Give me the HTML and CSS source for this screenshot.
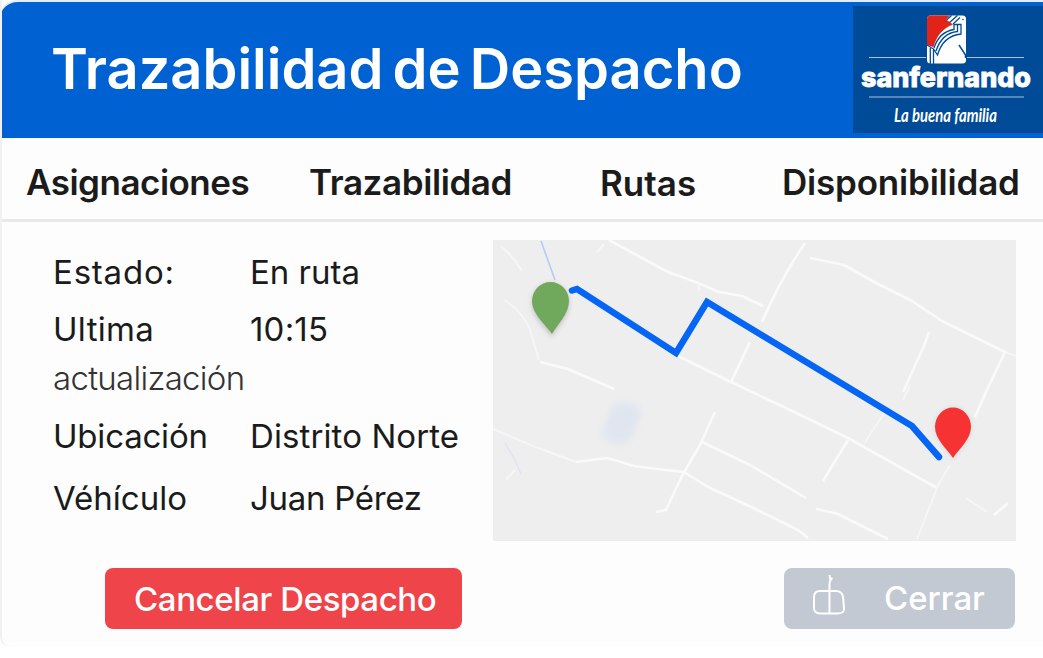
FILE: index.html
```
<!DOCTYPE html>
<html lang="es">
<head>
<meta charset="utf-8">
<title>Trazabilidad de Despacho</title>
<link rel="stylesheet" href="styles.css">
</head>
<body>
<main class="card">
  <header class="header">
    <h1 class="title">Trazabilidad de Despacho</h1>
    <svg class="logo" viewBox="0 0 190 127" width="190" height="127">
      <rect width="190" height="127" fill="#004b98"/>
      <path d="M16 51.500H73M114 51.500H171M16 91H171" stroke="#a9c2dc" stroke-width="1.200"/>
      <rect x="74" y="9.500" width="39" height="48" rx="3.500" fill="#fff"/>
      <path d="M77.500 9.500H97L93 13.500L100 18.500Q85 24 80.500 41L74 39V13Q74 9.500 77.500 9.500Z" fill="#e2231a"/>
      <path d="M96.500 16.500L104.500 9.500M93.500 14L98.500 9.500M100 18L107 11.500" stroke="#004b98" stroke-width="1.200" fill="none"/>
      <path d="M81 42Q86 26 101 23.500V18.500H108V28Q90 30 84.500 49L80.500 43M83 45Q89 27 104.500 25.500V19" stroke="#004b98" stroke-width="1.300" fill="none"/>
      <path d="M74 39L80.500 43V58M77.300 42V58" stroke="#004b98" stroke-width="1.300" fill="none"/>
      <path d="M106 39L112.500 49V52" stroke="#004b98" stroke-width="1.500" fill="none"/>
      <circle cx="110" cy="13.500" r=".8" fill="#004b98"/>
      <text class="logo-name" x="8" y="81" textLength="170" lengthAdjust="spacingAndGlyphs">sanfernando</text>
      <text class="logo-tag" x="41" y="116" textLength="103" lengthAdjust="spacingAndGlyphs">La buena familia</text>
    </svg>
  </header>
  <nav class="nav">
    <a class="tab tab-assign">Asignaciones</a>
    <a class="tab tab-trace">Trazabilidad</a>
    <a class="tab tab-routes">Rutas</a>
    <a class="tab tab-avail">Disponibilidad</a>
  </nav>
  <section class="content">
    <div class="details">
      <span class="first estado">Estado:</span><span class="first">En ruta</span>
      <span class="ultima">Ultima</span><span class="hora">10:15</span>
      <span class="light">actualización</span><span></span>
      <span class="ubic">Ubicación</span><span class="norte">Distrito Norte</span>
      <span>Véhículo</span><span class="juan">Juan Pérez</span>
    </div>
    <svg class="map" viewBox="493 240 523 301" width="523" height="301">
      <defs>
        <filter id="soft" x="-30%" y="-30%" width="160%" height="160%"><feGaussianBlur stdDeviation="2.500"/></filter>
        <filter id="lake" x="-50%" y="-50%" width="200%" height="200%"><feGaussianBlur stdDeviation="3.500"/></filter>
      </defs>
      <rect x="493" y="240" width="523" height="301" fill="#eee"/>
      <path d="M615 402L636 404L642 413L632 438L619 446L602 438L604 424Z" fill="#e0e6f0" filter="url(#lake)"/>
      <g fill="none" stroke="#fafafa" stroke-width="2.600" stroke-linejoin="round">
        <path d="M609 240L640 257L668 272L698 283L719 292L742 296L763 306"/>
        <path d="M805 243Q780 280 762 322M810 258L844 265L876 283L912 301L942 321L1005 352L986 392L975 417"/>
        <path d="M929 332L924 346L903 392"/>
        <path d="M676 355L731 382L790 410L848 438L937 488"/>
        <path d="M750 342L731 382M848 440L823 481"/>
        <path d="M715 412L700 445L682 476L666 510L656 512"/>
        <path d="M702 442L750 465L806 498M816 509L838 514L888 539M684 472L708 487L745 504L798 530L808 538"/>
        <path d="M576 462L607 458L634 466L665 470L684 472"/>
        <path d="M540 362L568 369L614 389"/>
        <path d="M1008 503L994 515"/>
      </g>
      <g fill="none" stroke="#f6f6f6" stroke-width="2">
        <path d="M501 246Q514 257 522 271M505 300Q525 315 530 330L539 360M597 252L604 244M699 282V291M493 429L533 446L576 462M910 385L903 400M885 412L865 442M937 488L917 539M937 487L950 465M966 498L987 512M1005 352L1016 356M506 480L515 470"/>
      </g>
      <path d="M541 241L555 280" stroke="#b4cbf3" stroke-width="1.600"/>
      <path d="M505 443L514 458L521 474" fill="none" stroke="#dfe4f0" stroke-width="1.500"/>
      <path d="M572 290.500L577 289L676 353L707 302L912 426L939 457" fill="none" stroke="#0565f4" stroke-width="6.500" stroke-linecap="round" stroke-linejoin="miter"/>
      <path d="M552 337C546 328 532 318 532 303A18.500 19.500 0 0 1 569 303C569 318 557 327 552 337Z" fill="#a3929f" opacity=".5" filter="url(#soft)"/>
      <path d="M552 334C546 325 532 314 532 301A18.500 19 0 0 1 569 301C569 314 557 325 552 334Z" fill="#70a95b"/>
      <path d="M953 459C947 450 935 440 935 427A18 19 0 0 1 971 427C971 440 959 450 953 459Z" fill="#a9c4c8" opacity=".5" filter="url(#soft)"/>
      <path d="M953 458C947 449 935 439 935 427A18 19.500 0 0 1 971 427C971 439 959 449 953 458Z" fill="#f73232"/>
    </svg>
  </section>
  <footer class="actions">
    <button class="btn cancel">Cancelar Despacho</button>
    <button class="btn close">
      <svg class="close-icon" viewBox="0 0 34 40" width="34" height="40" fill="none" stroke="#fff" stroke-width="2">
        <path d="M8 16Q2 16 2 22V31Q1 38 8 38.500H26Q33 38 32 33L31 22Q30 16 24 16Z"/><path d="M17.500 38V9Q17.500 5 20.500 3M18.500 6L17.500 0"/>
      </svg>
      <span class="close-label">Cerrar</span>
    </button>
  </footer>
</main>
</body>
</html>
```
FILE: styles.css
```
* { box-sizing: border-box; }
body {
  margin: 0;
  background: #fff;
  font-family: Inter, "Liberation Sans", sans-serif;
  color: #1b1b1c;
}
.card {
  width: 1043px;
  height: 647px;
  background: #fdfdfd;
  border-left: 2px solid #f0f1f1;
  border-bottom-left-radius: 10px;
  overflow: hidden;
}
.header {
  display: flex;
  justify-content: space-between;
  height: 138px;
  margin-left: -2px;
  padding: 4px 0 0 51px;
  background: #0062d2;
  border-top: 2px solid #e3edf5;
  border-top-left-radius: 18px;
}
.title {
  margin: 0;
  font-size: 56px;
  font-weight: 600;
  line-height: 126px;
  word-spacing: -5px;
  color: #fff;
  white-space: nowrap;
}
.logo { flex: none; display: block; }
.logo-name { font: 800 27px Inter, sans-serif; fill: #fff; stroke: #fff; stroke-width: .8px; }
.logo-tag { font: italic 700 18px Lato, sans-serif; fill: #fff; }
.nav {
  display: flex;
  height: 84px;
  padding-left: 24px;
  border-bottom: 3px solid #e9e9ea;
}
.tab {
  font-size: 35px;
  font-weight: 600;
  line-height: 88px;
  white-space: nowrap;
}
.tab-assign { width: 283px; letter-spacing: -.5px; }
.tab-trace { width: 291px; letter-spacing: -.4px; }
.tab-routes { width: 182px; line-height: 90px; }
.tab-avail { letter-spacing: -.2px; }
.content {
  display: flex;
  height: 319px;
  padding: 18px 0 0 51px;
}
.details {
  display: grid;
  grid-template-columns: 197px 243px;
  grid-template-rows: 64px 58px 40px 76px 48px;
  align-items: center;
  height: 286px;
  margin-top: -4px;
  font-size: 33px;
  white-space: nowrap;
}
.first { padding-top: 8px; }
.estado { letter-spacing: .8px; }
.ultima { letter-spacing: .3px; }
.hora { letter-spacing: .2px; }
.light { font-weight: 300; letter-spacing: -.7px; color: #333; }
.ubic { letter-spacing: -.2px; }
.norte { letter-spacing: .1px; }
.juan { letter-spacing: -.3px; }
.map { flex: none; display: block; }
.actions {
  display: flex;
  justify-content: space-between;
  padding: 27px 28px 0 103px;
}
.btn {
  display: flex;
  align-items: center;
  height: 61px;
  border: 0;
  border-radius: 8px;
  font: 500 33px Inter, sans-serif;
  color: #fff;
  white-space: nowrap;
}
.cancel { width: 357px; padding: 0 0 0 29px; background: #ef444a; letter-spacing: -.4px; }
.close { width: 231px; padding: 0 0 0 28px; gap: 38px; background: #c3c9d3; }
.close-icon { flex: none; margin-top: -7px; }
.close-label { margin-top: -1px; }
```
